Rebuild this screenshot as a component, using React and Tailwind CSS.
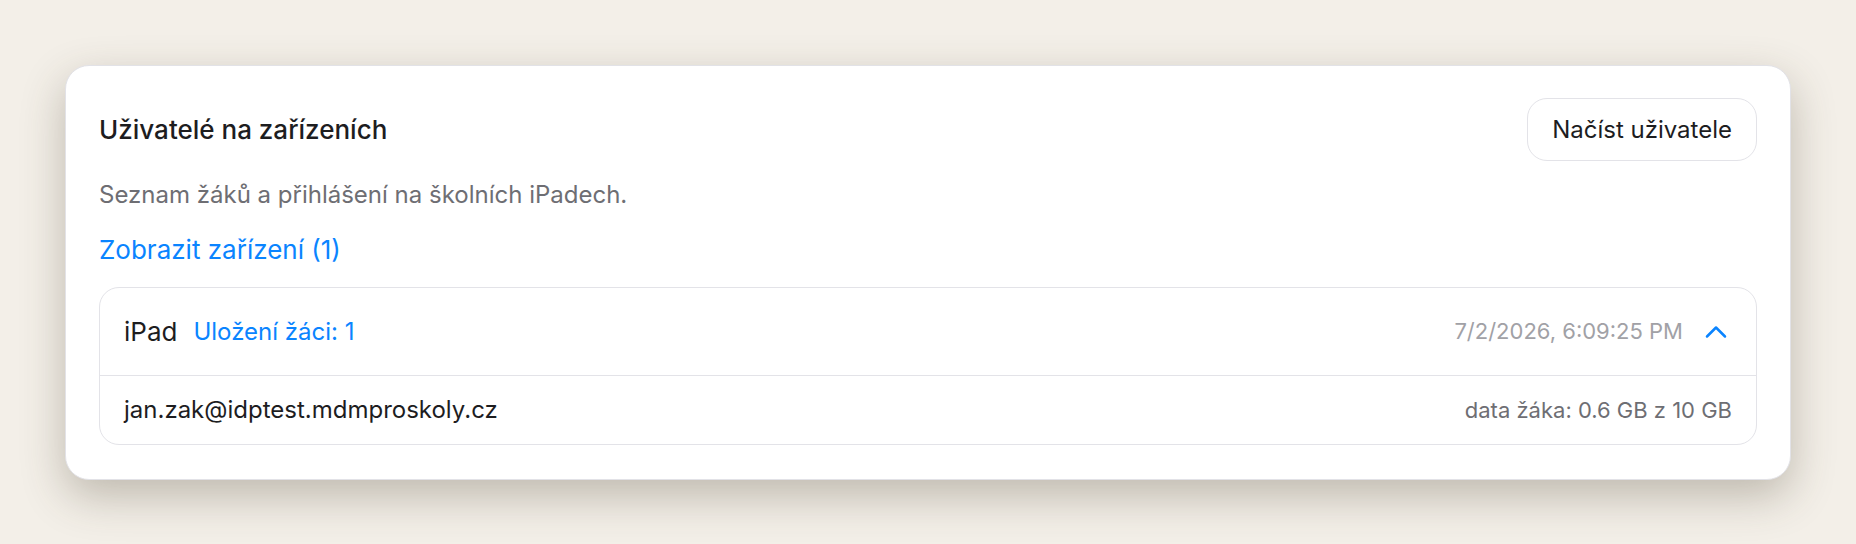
export default function App() {
  return (
    <div className="min-h-[544px] w-full bg-[#f3efe8] pt-[65px] px-[65px] pb-[65px]" style={{ fontFamily: 'Inter, "Noto Sans", sans-serif' }}>
      <div className="rounded-[24px] border border-[#e2e2e7] bg-white px-[33px] pt-[32px] pb-[34px] shadow-[0_16px_44px_rgba(70,60,40,0.3)]">
        <div className="flex items-center justify-between">
          <h2 className="text-[26px] leading-[32px] font-medium text-[#1d1d1f]">Uživatelé na zařízeních</h2>
          <button className="h-[63px] rounded-[20px] border-[1.5px] border-[#e3e3e8] bg-white px-[24px] text-[24px] text-[#1d1d1f]">Načíst uživatele</button>
        </div>
        <p className="mt-[18px] text-[24px] leading-[32px] text-[#6e6e73]">Seznam žáků a přihlášení na školních iPadech.</p>
        <div className="mt-[23px] text-[26px] leading-[32px] text-[#0a84ff]">Zobrazit zařízení (1)</div>
        <div className="mt-[21px] rounded-[20px] border-[1.5px] border-[#e3e3e8]">
          <div className="flex h-[87px] items-center justify-between px-[24px]">
            <div className="flex items-center gap-[16px]">
              <span className="text-[26px] text-[#1d1d1f]">iPad</span>
              <span className="text-[24px] text-[#0a84ff]">Uložení žáci: 1</span>
            </div>
            <div className="flex items-center gap-[21px]">
              <span className="text-[22px] text-[#a1a1a6]">7/2/2026, 6:09:25 PM</span>
              <svg width="24" height="24" viewBox="0 0 24 24" className="mr-[4px]" fill="none" stroke="#0a84ff" strokeWidth="2.5" strokeLinecap="round" strokeLinejoin="round">
                <polyline points="3,16.5 12,7.5 21,16.5" />
              </svg>
            </div>
          </div>
          <div className="flex h-[69px] items-center justify-between border-t-[1.5px] border-[#e3e3e8] px-[24px]">
            <span className="text-[24px] text-[#1d1d1f]">jan.zak@idptest.mdmproskoly.cz</span>
            <span className="text-[22px] text-[#6e6e73]">data žáka: 0.6 GB z 10 GB</span>
          </div>
        </div>
      </div>
    </div>
  );
}
